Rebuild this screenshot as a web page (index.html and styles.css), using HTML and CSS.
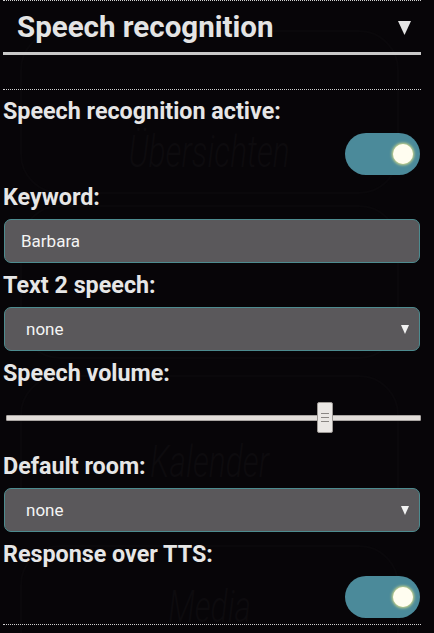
FILE: index.html
```html
<!DOCTYPE html>
<html>
<head>
<meta charset="utf-8">
<link rel="stylesheet" href="styles.css">
</head>
<body>
<div class="bg">
  <div class="tile tile-a"><span>Übersichten</span></div>
  <div class="tile tile-b"><span>Informationen</span></div>
  <div class="tile tile-c"><span>Kalender</span></div>
  <div class="tile tile-d"><span>Media</span></div>
</div>
<div class="panel">
  <div class="dots"></div>
  <div class="header">
    <span class="title">Speech recognition</span>
    <svg class="caret" width="13" height="14" viewBox="0 0 13 14"><path d="M0 0H13L6.5 14Z" fill="#e4e4e4"/></svg>
  </div>
  <div class="dots dots-mid"></div>

  <div class="field">
    <div class="label">Speech recognition active:</div>
    <div class="toggle-row"><div class="toggle"><div class="knob"></div></div></div>
  </div>

  <div class="field">
    <div class="label">Keyword:</div>
    <div class="box input">Barbara</div>
  </div>

  <div class="field">
    <div class="label">Text 2 speech:</div>
    <div class="box select"><span>none</span><svg class="sel-caret" width="8" height="9" viewBox="0 0 8 9"><path d="M0 0H8L4 9Z" fill="#f2f2f2"/></svg></div>
  </div>

  <div class="field">
    <div class="label">Speech volume:</div>
    <div class="slider">
      <div class="track"></div>
      <div class="thumb"><i></i><i></i><i></i></div>
    </div>
  </div>

  <div class="field">
    <div class="label">Default room:</div>
    <div class="box select"><span>none</span><svg class="sel-caret" width="8" height="9" viewBox="0 0 8 9"><path d="M0 0H8L4 9Z" fill="#f2f2f2"/></svg></div>
  </div>

  <div class="field">
    <div class="label">Response over TTS:</div>
    <div class="toggle-row"><div class="toggle"><div class="knob"></div></div></div>
  </div>
  <div class="dots dots-end"></div>
</div>
</body>
</html>
```
FILE: styles.css
```css
html, body {
  margin: 0;
  padding: 0;
  background: #070508;
  height: 633px;
  overflow: hidden;
}
body {
  position: relative;
  font-family: Roboto, "Noto Sans", sans-serif;
}
.bg {
  position: absolute;
  left: 0;
  top: 0;
  width: 434px;
  height: 633px;
  overflow: hidden;
  z-index: 0;
}
.tile {
  position: absolute;
  left: 20px;
  width: 375px;
  border: 2px solid #0a080b;
  border-radius: 40px;
  display: flex;
  align-items: center;
  justify-content: center;
}
.tile span {
  font-family: Roboto, sans-serif;
  font-style: italic;
  font-weight: 300;
  font-size: 44px;
  color: #0d0b0e;
  transform: scaleX(0.72);
}
.tile-a { top: 30px; height: 160px; }
.tile-b { top: 205px; height: 150px; }
.tile-c { top: 375px; height: 150px; }
.tile-d { top: 545px; height: 120px; }
.tile-a span { margin-top: 80px; }
.tile-b span { margin-top: -80px; }
.tile-c span { margin-top: 20px; }
.tile-d span { margin-top: 0; }

.panel {
  position: relative;
  z-index: 1;
  margin-left: 3px;
  width: 418px;
  color: #e6e6e6;
}
.dots {
  height: 0;
  border-top: 1px dotted #cfcfcf;
}
.dots-mid { margin-top: 34px; }
.dots-end { margin-top: 6px; }

.header {
  display: flex;
  align-items: center;
  justify-content: space-between;
  padding: 8px 10px 7px 14px;
  border-bottom: 3px solid #c9c9c9;
}
.title {
  font-size: 29.5px;
  font-weight: 700;
  line-height: 36px;
  color: #e4e4e4;
}
.caret { margin-top: 2px; }

.field {
  margin-top: 9px;
}
.dots-mid + .field { margin-top: 8px; }
.label {
  font-size: 23.3px;
  font-weight: 700;
  line-height: 26px;
  color: #e6e6e6;
  margin-bottom: 9px;
}
.toggle-row {
  display: flex;
  justify-content: flex-end;
  padding-right: 1px;
}
.toggle {
  width: 75px;
  height: 42px;
  border-radius: 21px;
  background: #4b8a9a;
  display: flex;
  align-items: center;
  justify-content: flex-end;
  padding-right: 7px;
  box-sizing: border-box;
}
.knob {
  width: 20px;
  height: 20px;
  border-radius: 50%;
  background: #fffdf0;
  box-shadow: 0 0 3px 1px #d8dc8a;
}
.box {
  margin: 0 1px;
  height: 44px;
  box-sizing: border-box;
  border: 1.5px solid #4d8b8f;
  border-radius: 7px;
  background: #5a585b;
  color: #f4f4f4;
  font-size: 17px;
  display: flex;
  align-items: center;
}
.input { padding-left: 16px; }
.select {
  padding-left: 21px;
  padding-right: 10px;
  justify-content: space-between;
}
.sel-caret { margin-top: 1px; }

.slider {
  position: relative;
  height: 31px;
  margin-top: 16px;
  margin-bottom: 20px;
  display: flex;
  align-items: center;
}
.track {
  margin-left: 3px;
  width: 417px;
  height: 6px;
  box-sizing: border-box;
  background: #e2deda;
  border: 1px solid #a9a5a2;
  border-radius: 1px;
}
.thumb {
  position: absolute;
  left: 314px;
  top: 0;
  width: 16px;
  height: 31px;
  box-sizing: border-box;
  background: #eae7e4;
  border: 1px solid #9c9894;
  border-radius: 2px;
  display: flex;
  flex-direction: column;
  justify-content: center;
  align-items: center;
  gap: 3px;
}
.thumb i {
  display: block;
  width: 8px;
  height: 1px;
  background: #8a8683;
}
```
